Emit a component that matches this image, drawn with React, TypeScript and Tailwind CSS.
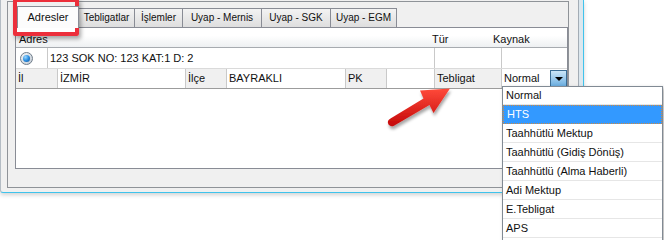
import React from 'react';

const TABS = [
  { label: 'Tebligatlar', w: 'w-[57px]' },
  { label: 'İşlemler', w: 'w-[49px]' },
  { label: 'Uyap - Mernis', w: 'w-[80px]' },
  { label: 'Uyap - SGK', w: 'w-[70px]' },
  { label: 'Uyap - EGM', w: 'w-[67px]' },
];

const OPTIONS = [
  'Normal',
  'HTS',
  'Taahhütlü Mektup',
  'Taahhütlü (Gidiş Dönüş)',
  'Taahhütlü (Alma Haberli)',
  'Adi Mektup',
  'E.Tebligat',
  'APS',
];

const Cell = ({
  w,
  gray,
  children,
}: {
  w: string;
  gray?: boolean;
  children?: React.ReactNode;
}) => (
  <div
    className={`${w} h-full shrink-0 flex items-center pl-[2px] border-r border-[#c9c9c9] ${
      gray ? 'bg-[#f0f0f0]' : 'bg-white'
    }`}
  >
    {children}
  </div>
);

const Arrow = () => (
  <svg width="80" height="52" viewBox="0 0 80 52" className="absolute left-[380px] top-[83px]">
    <defs>
      <linearGradient id="red" x1="0" y1="0" x2="0" y2="1">
        <stop offset="0" stopColor="#ff4a3a" />
        <stop offset="1" stopColor="#c40808" />
      </linearGradient>
      <filter id="shadow" x="-20%" y="-20%" width="150%" height="160%">
        <feDropShadow dx="1" dy="3" stdDeviation="1.6" floodColor="#000" floodOpacity="0.35" />
      </filter>
    </defs>
    <g filter="url(#shadow)">
      <path
        d="M8.5 41.5 Q6.5 37.5 10.5 35.5 L43.5 15.5 L40 7.5 L70 5.5 L53.5 30 L49.5 22 L13.5 43 Q10.5 44 8.5 41.5 Z"
        fill="url(#red)"
      />
    </g>
  </svg>
);

export default function App() {
  return (
    <div className="relative w-[664px] h-[240px] bg-white overflow-hidden text-[11px] text-[#101010] font-['Liberation_Sans',Arial,sans-serif] leading-none">
      {/* window */}
      <div className="w-[584px] h-[193px] flex bg-[#f0f0f0] border-l border-[#b4bcc4] border-r border-b border-r-[#3fc3ec] border-b-[#3fc3ec] rounded-bl-[3px] shadow-[0_2px_4px_rgba(0,0,0,0.18)]">
        <div className="pl-[6px] pt-[1px]">
          <div className="w-[562px] h-[187px] border border-[#8f9398] bg-[#f0f0f0] pl-[7px] pt-[4px]">
            {/* tab strip */}
            <div className="flex items-end h-[21px] pl-[2px]">
              <div className="relative z-10 w-[62px] h-[22px] bg-[#fcfcfc] border border-b-0 border-[#898c95] flex items-center justify-center text-[11px] -mb-px">
                Adresler
              </div>
              {TABS.map((t) => (
                <div
                  key={t.label}
                  className={`${t.w} h-[19px] -ml-px bg-linear-to-b from-[#f3f3f3] to-[#dedede] border border-b-0 border-[#898c95] flex items-center justify-center text-[10px]`}
                >
                  {t.label}
                </div>
              ))}
            </div>

            {/* tab page */}
            <div className="w-[553px] h-[142px] border border-[#898c95] bg-white flex flex-col">
              {/* header */}
              <div className="h-[20px] flex items-center bg-linear-to-b from-white from-40% to-[#eef0f2] border-b border-[#a7abb0] shrink-0">
                <div className="w-[416px] pl-[3px] pt-[4px]">Adres</div>
                <div className="w-[61px] pt-[4px]">Tür</div>
                <div className="pt-[4px]">Kaynak</div>
              </div>

              {/* row 1 */}
              <div className="h-[21px] flex border-b border-[#dadada] shrink-0">
                <div className="w-[32px] h-full shrink-0 flex items-center pl-[4px] border-r border-[#c9c9c9]">
                  <span className="w-[13px] h-[13px] rounded-full border border-[#6f7c89] bg-linear-to-br from-[#f4f6f8] to-[#c3ccd5] flex items-center justify-center">
                    <span className="w-[7px] h-[7px] rounded-full bg-radial-[at_35%_30%] from-[#9ad8ff] via-[#2c8ee0] to-[#0b4f98]" />
                  </span>
                </div>
                <div className="w-[387px] h-full shrink-0 flex items-center pl-[2px] border-r border-[#c9c9c9]">
                  123 SOK NO: 123 KAT:1 D: 2
                </div>
                <div className="w-[67px] h-full shrink-0 border-r border-[#c9c9c9]" />
                <div className="flex-1" />
              </div>

              {/* row 2 */}
              <div className="h-[20px] flex border-b border-[#9c9c9c] shrink-0">
                <Cell w="w-[42px]" gray>İl</Cell>
                <Cell w="w-[128px]">İZMİR</Cell>
                <Cell w="w-[41px]" gray>İlçe</Cell>
                <Cell w="w-[119px]">BAYRAKLI</Cell>
                <Cell w="w-[41px]" gray>PK</Cell>
                <Cell w="w-[48px]" />
                <Cell w="w-[67px]" gray>Tebligat</Cell>
                <div className="flex-1 h-full flex items-center pl-[2px] bg-white">
                  <span className="flex-1">Normal</span>
                  <span className="w-[17px] h-[17px] border border-[#3a6d95] bg-linear-to-b from-[#cbe6f8] to-[#6aaee0] flex items-center justify-center">
                    <span className="w-0 h-0 border-l-[4px] border-r-[4px] border-t-[4px] border-l-transparent border-r-transparent border-t-black" />
                  </span>
                </div>
              </div>

              <div className="flex-1 bg-white" />
            </div>
          </div>
        </div>
        <div className="w-[9px] shrink-0" />
        <div className="w-[5px] h-full shrink-0 border-l border-[#a3acb5] bg-[#dce7ee]" />
      </div>

      {/* annotation box */}
      <div className="absolute left-[13px] top-[-2px] w-[66px] h-[38px] border-[4px] border-[#ec2f3b] rounded-[2px] shadow-[2px_3px_4px_rgba(0,0,0,0.35)]" />

      <Arrow />

      {/* dropdown list */}
      <div className="absolute left-[502px] top-[86px] w-[161px] h-[160px] bg-white border border-[#818a94] shadow-[2px_2px_4px_rgba(0,0,0,0.3)] flex flex-col">
        {OPTIONS.map((o, i) => (
          <div
            key={o}
            className={`${i === 0 ? 'h-[18px]' : 'h-[19px]'} shrink-0 flex items-center pl-[3px] ${
              i === 1
                ? 'bg-[#3399ff] text-white border border-dotted border-[#d08a40]'
                : 'border-b border-[#e6e6e6]'
            }`}
          >
            {o}
          </div>
        ))}
      </div>
    </div>
  );
}
